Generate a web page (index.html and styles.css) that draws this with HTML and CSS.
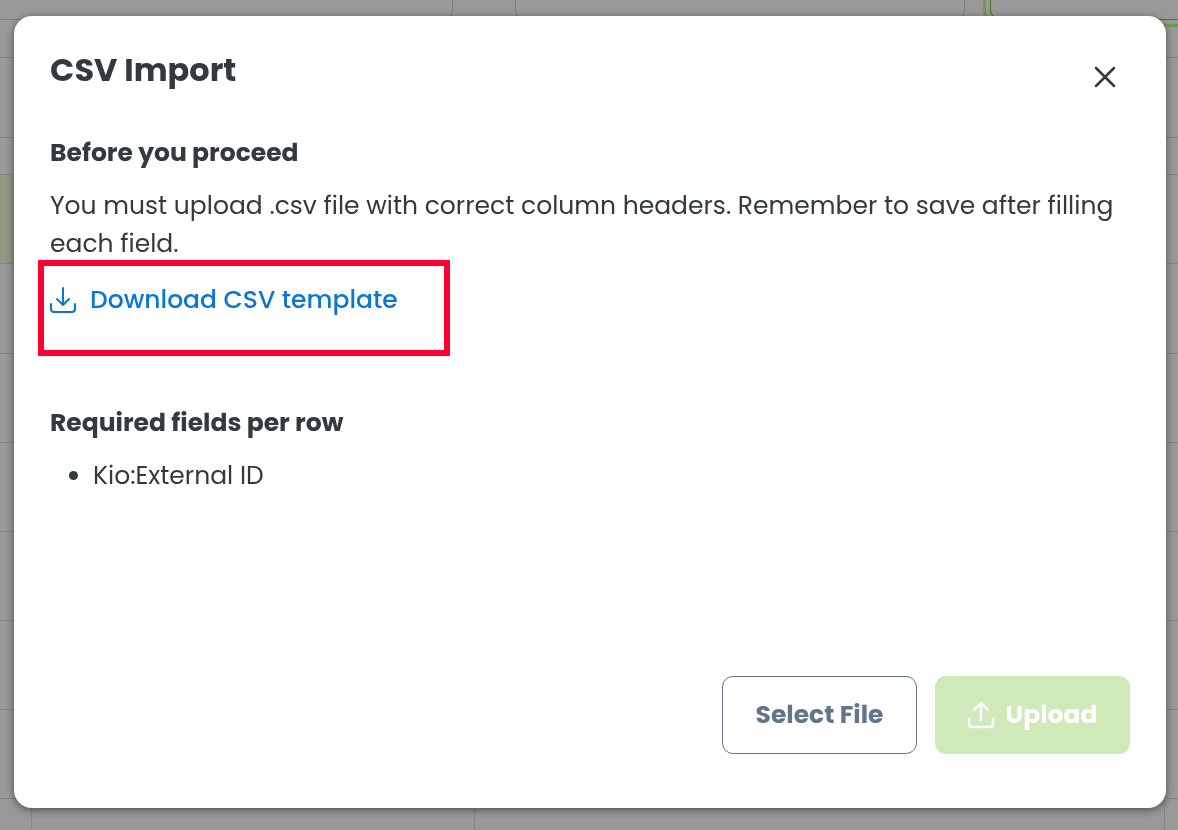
FILE: index.html
```html
<!DOCTYPE html>
<html lang="en">
	<head>
		<meta charset="utf-8">
		<title>CSV Import</title>
		<link rel="stylesheet" href="styles.css">
	</head>
	<body>
		<div class="page" aria-hidden="true">
			<div class="filters">
				<div class="field"></div>
				<div class="field"></div>
				<div class="field field-active"></div>
			</div>
			<div class="toolbar"></div>
			<div class="rows">
				<div class="row row-head"><span></span><span></span><span></span></div>
				<div class="row row-selected"><span></span><span></span><span></span></div>
				<div class="row"><span></span><span></span><span></span></div>
				<div class="row"><span></span><span></span><span></span></div>
				<div class="row"><span></span><span></span><span></span></div>
				<div class="row"><span></span><span></span><span></span></div>
				<div class="row"><span></span><span></span><span></span></div>
				<div class="row"><span></span><span></span><span></span></div>
				<div class="row"><span></span><span></span><span></span></div>
			</div>
		</div>

		<div class="overlay">
			<main class="dialog" role="dialog" aria-modal="true" aria-labelledby="title">
				<header class="dialog-head">
					<h1 id="title">CSV Import</h1>
					<button class="close" type="button" aria-label="Close">
						<svg width="22" height="22" viewBox="0 0 22 22"><path d="M2 2l18 18M20 2L2 20"/></svg>
					</button>
				</header>

				<section class="intro">
					<h2>Before you proceed</h2>
					<p>You must upload .csv file with correct column headers. Remember to save after filling each field.</p>
					<div class="template">
						<a href="#">
							<svg width="26" height="26" viewBox="0 0 26 26"><path d="M13 1v17M7 12l6 6 6-6M1 17v5q0 3 3 3h18q3 0 3-3v-5"/></svg>
							<span>Download CSV template</span>
						</a>
						<div class="marker"></div>
					</div>
				</section>

				<section class="required">
					<h2>Required fields per row</h2>
					<ul>
						<li>Kio:External ID</li>
					</ul>
				</section>

				<footer class="actions">
					<button class="btn btn-outline" type="button">Select File</button>
					<button class="btn btn-primary" type="button" disabled>
						<svg width="26" height="26" viewBox="0 0 26 26"><path d="M13 18V1M6 8l7-7 7 7M1 17v5q0 3 3 3h18q3 0 3-3v-5"/></svg>
						<span>Upload</span>
					</button>
				</footer>
			</main>
		</div>
	</body>
</html>
```

FILE: styles.css
```css
* {
	box-sizing: border-box;
}

body {
	margin: 0;
	background: #fff;
	color: #32393f;
	font-family: Poppins, Inter, sans-serif;
	font-size: 25px;
	line-height: 38px;
}

h1, h2, p, ul {
	margin: 0;
}

svg {
	fill: none;
	stroke: currentColor;
	stroke-width: 2;
	stroke-linecap: round;
	stroke-linejoin: round;
	flex: none;
	overflow: visible;
}

/* page behind the dialog */
.page {
	position: fixed;
	inset: 0;
	overflow: hidden;
}

.filters {
	display: grid;
	grid-template-columns: 453px 450px 450px;
	column-gap: 62px;
	height: 58px;
	border-bottom: 1px solid #d5d8dc;
}

.filters .field:nth-child(3) {
	margin-left: -37px;
}

.field {
	height: 20px;
	border: 1px solid #d0d4da;
	border-top: 0;
	border-radius: 0 0 10px 10px;
}

.field:first-child {
	border-left: 0;
	border-bottom-left-radius: 0;
}

.field-active {
	border-color: #75d02f;
	outline: 3px solid #bcff83;
	outline-offset: 4px;
}

.toolbar {
	height: 80px;
	border-bottom: 1px solid #d5d8dc;
}

.row {
	display: grid;
	grid-template-columns: 32px 443px 690px 1fr;
	height: 89px;
	border-bottom: 1px solid #dcdee3;
}

.row span {
	border-right: 1px solid #dcdee3;
}

.row-head {
	height: 37px;
}

.row-selected span:first-child {
	background: #eeffde;
}

.row-selected + .row {
	height: 90px;
}

/* dialog */
.overlay {
	position: relative;
	display: flex;
	min-height: 100vh;
	padding: 16px 12px 22px 14px;
	background: rgba(0, 0, 0, 0.4);
}

.dialog {
	display: flex;
	flex: 1;
	flex-direction: column;
	padding: 35px 36px 54px;
	background: #fff;
	border-radius: 18px;
	box-shadow: 0 2px 8px rgba(0, 0, 0, 0.5);
}

.dialog-head {
	display: flex;
	align-items: center;
	justify-content: space-between;
	margin-bottom: 45px;
}

h1 {
	font-size: 32px;
	line-height: 38px;
}

h2 {
	margin-bottom: 15px;
	font-size: 25px;
	line-height: 38px;
}

.close {
	display: flex;
	margin: 14px 14px 0 0;
	padding: 0;
	border: 0;
	background: none;
	color: inherit;
}

.close svg {
	stroke-width: 2.5;
}

.template {
	position: relative;
	margin-top: 18px;
}

.template a {
	display: inline-flex;
	align-items: center;
	gap: 14px;
	color: #0b77d5;
	font-weight: 500;
	text-decoration: none;
}

.marker {
	position: absolute;
	top: -21px;
	left: -12px;
	width: 412px;
	height: 96px;
	border: 6px solid #ff0033;
	pointer-events: none;
}

.required {
	margin-top: 80px;
}

ul {
	padding-left: 43px;
}

.actions {
	display: flex;
	justify-content: flex-end;
	gap: 18px;
	margin-top: auto;
}

.btn {
	display: flex;
	align-items: center;
	justify-content: center;
	gap: 12px;
	min-width: 195px;
	height: 78px;
	padding: 0 31px;
	border: 1px solid transparent;
	border-radius: 11px;
	font: inherit;
	font-weight: 700;
}

.btn-outline {
	border-color: #64748b;
	background: #fff;
	color: #64748b;
}

.btn-primary {
	background: #cfe9b8;
	color: #fff;
}

.btn-primary svg {
	stroke-width: 2.5;
}
```
